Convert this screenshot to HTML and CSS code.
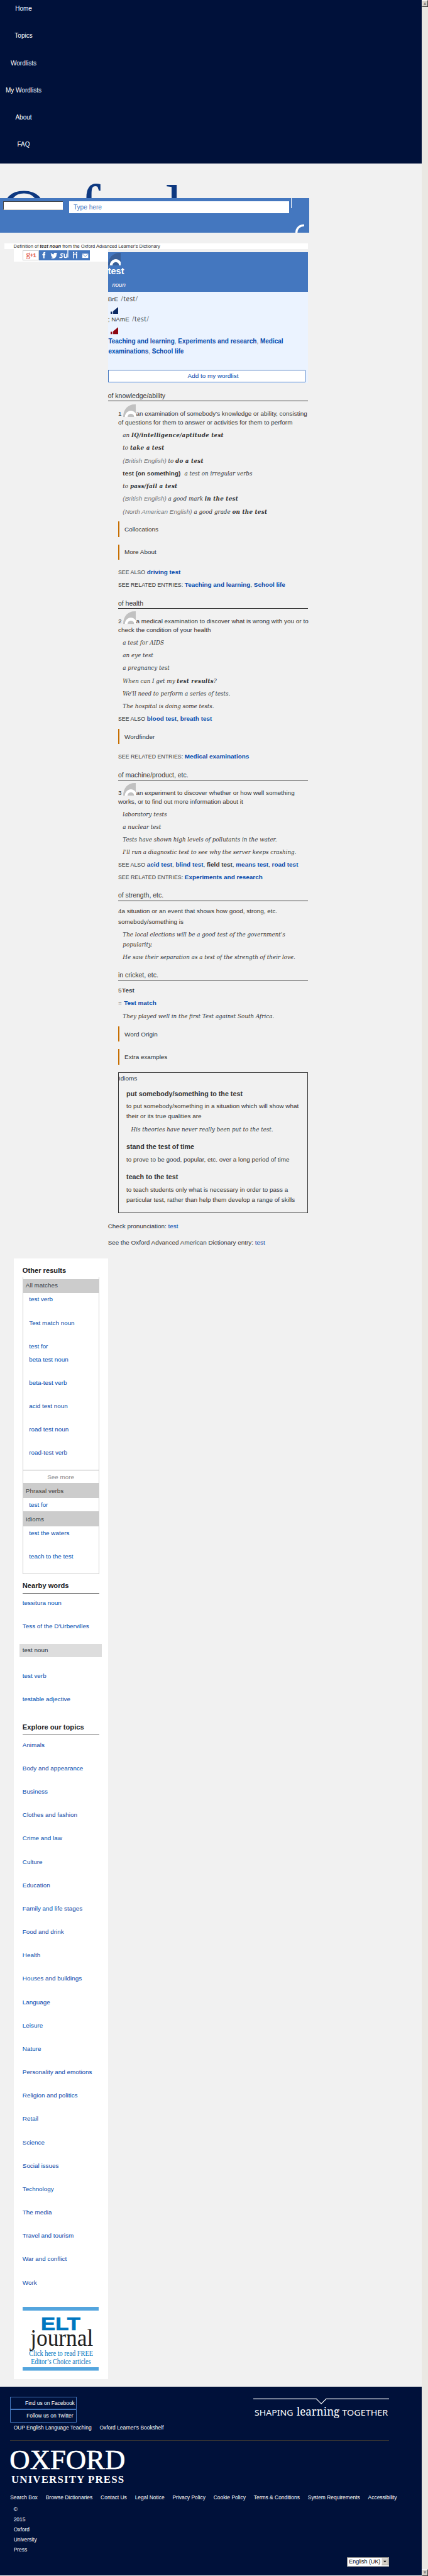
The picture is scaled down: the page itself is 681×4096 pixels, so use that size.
FILE: index.html
```html
<!DOCTYPE html>
<html lang="en">
<head>
<meta charset="utf-8">
<title>test noun - Oxford Advanced Learner's Dictionary</title>
<link rel="stylesheet" href="styles.css">
</head>
<body>
<svg width="0" height="0" class="defs">
  <symbol id="key" viewBox="0 0 30 30">
    <path d="M0 30C0 12 11 0 27 0h3v30z" fill="currentColor"/>
    <path d="M4 30a14 14.5 0 0 1 26-8v8z" fill="#fff"/>
    <path d="M10.3 30a7.8 8.2 0 0 1 15.6 0z" fill="currentColor"/>
  </symbol>
  <symbol id="speaker" viewBox="0 0 18 17">
    <path d="M0 11h4v6H0zM6 17v-7L18 0v17z" fill="currentColor"/>
  </symbol>
</svg>
<div class="page">
  <div class="content">
    <nav class="topnav">
      <a>Home</a><a>Topics</a><a>Wordlists</a><a>My Wordlists</a><a>About</a><a>FAQ</a>
    </nav>
    <svg class="brand" width="728" height="82" viewBox="0 0 728 82">
      <text><tspan x="3" y="161">O</tspan><tspan x="187" y="152">f</tspan><tspan x="352" y="152">d</tspan></text>
    </svg>
    <div class="searchbar">
      <span class="picker"></span>
      <span class="query">Type here</span>
      <span class="divider"></span>
      <svg class="lens" width="20" height="20" viewBox="0 0 20 20"><circle cx="19" cy="20" r="16.5" fill="none" stroke="#fff" stroke-width="5"/></svg>
    </div>
    <div class="crumb">Definition of <b><i>test noun</i></b> from the Oxford Advanced Learner's Dictionary</div>
    <div class="main">
      <div class="sharecol">
        <div class="share">
          <span class="gplus"><b>g</b>+1</span>
          <svg width="120" height="24" viewBox="0 0 120 24">
            <rect width="120" height="24" fill="#4477bf"/>
            <g fill="#fff">
              <path d="M10 19v-7H8V9h2V7.500c0-2.500 1.400-3.500 3.500-3.500H15v3h-1c-.8 0-1 .3-1 1v1h2l-.3 3H13v7z"/>
              <path d="M28 6c2 2.500 4 3.500 6.500 3.500 0-3 2-4 3.500-4 1 0 1.800.4 2.500 1l2.500-.8-1.300 1.800 1.800-.4-2 2c0 6-3.500 10-8.500 10-2 0-3.700-.5-5-1.500 2 0 3.500-.5 4.500-1.300-1.700-.3-2.800-1.200-3.300-2.500h1.500c-1.700-.6-2.600-2-2.600-3.600l1.300.4C28 9.500 27.400 7.500 28 6z"/>
              <path d="M67 0h2v17h-2zM80 4h3v2.500h-3zM87 4h3v2.500h-3zM80 8h10v2H80z"/>
              <path d="M102 8h14v10h-14z"/>
            </g>
            <g fill="none" stroke="#fff" stroke-width="2.300">
              <path d="M57.500 8h-4.500c-2 0-2 3.500 0 4s2.500 5 0 5h-5M59.500 8v6.500c0 3.500 6 3.500 6 0V8M81.500 8v11M88.500 8v11"/>
            </g>
            <path d="M103 9l6 6 6-6" fill="none" stroke="#4477bf" stroke-width="1.200"/>
          </svg>
        </div>
      </div>
      <article class="entry">
        <header class="head">
          <svg class="key" width="30" height="30"><use href="#key"/></svg>
          <h1>test</h1>
          <p>noun</p>
        </header>
        <div class="phon">
          <p>BrE <span class="ipa"><s>/</s>test<s>/</s></span></p>
          <svg class="spk uk" width="18" height="17"><use href="#speaker"/></svg>
          <p>; NAmE <span class="ipa"><s>/</s>test<s>/</s></span></p>
          <svg class="spk us" width="18" height="17"><use href="#speaker"/></svg>
          <p class="topics"><a>Teaching and learning</a>, <a>Experiments and research</a>, <a>Medical examinations</a>, <a>School life</a></p>
          <div class="add">Add to my wordlist</div>
        </div>

        <h2>of knowledge/ability</h2>
        <div class="sense">
          <p class="def">1 <svg class="key" width="30" height="30"><use href="#key"/></svg>an examination of somebody’s knowledge or ability, consisting<br>of questions for them to answer or activities for them to perform</p>
          <p class="ex"><i>an <b>IQ/intelligence/aptitude test</b></i></p>
          <p class="ex"><i>to <b>take a test</b></i></p>
          <p class="ex"><em>(British English)</em> <i>to <b>do a test</b></i></p>
          <p class="ex"><strong>test (on something)</strong> <i class="after">a test on irregular verbs</i></p>
          <p class="ex"><i>to <b>pass/fail a test</b></i></p>
          <p class="ex"><em>(British English)</em> <i>a good mark <b>in the test</b></i></p>
          <p class="ex"><em>(North American English)</em> <i>a good grade <b>on the test</b></i></p>
          <div class="fold">Collocations</div>
          <div class="fold">More About</div>
          <p class="ref r18"><small>SEE ALSO</small> <a>driving test</a></p>
          <p class="ref"><small>SEE RELATED ENTRIES:</small> <a>Teaching and learning</a>, <a>School life</a></p>

          <h2>of health</h2>
          <p class="def">2 <svg class="key" width="30" height="30"><use href="#key"/></svg>a medical examination to discover what is wrong with you or to<br>check the condition of your health</p>
          <p class="ex"><i>a test for AIDS</i></p>
          <p class="ex"><i>an eye test</i></p>
          <p class="ex"><i>a pregnancy test</i></p>
          <p class="ex"><i>When can I get my <b>test results</b>?</i></p>
          <p class="ex"><i>We'll need to perform a series of tests.</i></p>
          <p class="ex"><i>The hospital is doing some tests.</i></p>
          <p class="ref r5"><small>SEE ALSO</small> <a>blood test</a>, <a>breath test</a></p>
          <div class="fold f12">Wordfinder</div>
          <p class="ref r18"><small>SEE RELATED ENTRIES:</small> <a>Medical examinations</a></p>

          <h2>of machine/product, etc.</h2>
          <p class="def">3 <svg class="key" width="30" height="30"><use href="#key"/></svg>an experiment to discover whether or how well something<br>works, or to find out more information about it</p>
          <p class="ex"><i>laboratory tests</i></p>
          <p class="ex"><i>a nuclear test</i></p>
          <p class="ex"><i>Tests have shown high levels of pollutants in the water.</i></p>
          <p class="ex"><i>I'll run a diagnostic test to see why the server keeps crashing.</i></p>
          <p class="ref r5"><small>SEE ALSO</small> <a>acid test</a>, <a>blind test</a>, <strong>field test</strong>, <a>means test</a>, <a>road test</a></p>
          <p class="ref"><small>SEE RELATED ENTRIES:</small> <a>Experiments and research</a></p>

          <h2>of strength, etc.</h2>
          <p class="plain">4a situation or an event that shows how good, strong, etc.<br>somebody/something is</p>
          <p class="ex e6"><i>The local elections will be a good test of the government's<br>popularity.</i></p>
          <p class="ex"><i>He saw their separation as a test of the strength of their love.</i></p>

          <h2 class="h17">in cricket, etc.</h2>
          <p class="plain p12">5<strong class="lemma">Test</strong></p>
          <p class="ref">= <a class="eq">Test match</a></p>
          <p class="ex e7"><i>They played well in the first Test against South Africa.</i></p>
          <div class="fold">Word Origin</div>
          <div class="fold">Extra examples</div>
          <section class="idioms">
            <p>Idioms</p>
            <div class="idm">
              <h3>put somebody/something to the test</h3>
              <p>to put somebody/something in a situation which will show what<br>their or its true qualities are</p>
              <p class="ex e6"><i>His theories have never really been put to the test.</i></p>
              <h3>stand the test of time</h3>
              <p>to prove to be good, popular, etc. over a long period of time</p>
              <h3>teach to the test</h3>
              <p>to teach students only what is necessary in order to pass a<br>particular test, rather than help them develop a range of skills</p>
            </div>
          </section>
        </div>
        <p class="note n1">Check pronunciation: <a>test</a></p>
        <p class="note n2">See the Oxford Advanced American Dictionary entry: <a>test</a></p>
      </article>
    </div>

    <aside class="side">
      <h4>Other results</h4>
      <div class="results">
        <h5 class="first">All matches</h5>
        <ul>
          <li>test verb</li><li>Test match noun</li><li class="short">test for</li><li>beta test noun</li>
          <li>beta-test verb</li><li>acid test noun</li><li>road test noun</li><li>road-test verb</li>
        </ul>
        <div class="more">See more</div>
        <h5>Phrasal verbs</h5>
        <ul><li class="short">test for</li></ul>
        <h5>Idioms</h5>
        <ul><li>test the waters</li><li>teach to the test</li></ul>
      </div>
      <h4 class="ruled nearby">Nearby words</h4>
      <ul class="links">
        <li>tessitura noun</li><li class="tight">Tess of the D'Urbervilles</li><li class="current">test noun</li><li>test verb</li><li>testable adjective</li>
      </ul>
      <h4 class="ruled explore">Explore our topics</h4>
      <ul class="links">
        <li>Animals</li><li>Body and appearance</li><li>Business</li><li>Clothes and fashion</li><li>Crime and law</li><li>Culture</li><li>Education</li><li>Family and life stages</li><li>Food and drink</li><li>Health</li><li>Houses and buildings</li><li>Language</li><li>Leisure</li><li>Nature</li><li>Personality and emotions</li><li>Religion and politics</li><li>Retail</li><li>Science</li><li>Social issues</li><li>Technology</li><li>The media</li><li>Travel and tourism</li><li>War and conflict</li><li>Work</li>
      </ul>
      <svg class="elt" width="180" height="150" viewBox="0 0 180 150">
        <path d="M0 0h180v9H0zM0 142h180v8H0z" fill="#54a5de"/>
        <text class="elt-a" x="43" y="55" textLength="93" lengthAdjust="spacingAndGlyphs">ELT</text>
        <text class="elt-b" x="18" y="92" textLength="148" lengthAdjust="spacingAndGlyphs">journal</text>
        <text class="elt-c" x="15" y="116" textLength="151" lengthAdjust="spacingAndGlyphs">Click here to read FREE</text>
        <text class="elt-c" x="19.500" y="135" textLength="141" lengthAdjust="spacingAndGlyphs">Editor’s Choice articles</text>
      </svg>
    </aside>

    <footer class="foot">
      <div class="foot-top">
        <div class="social"><a>Find us on Facebook</a><a>Follow us on Twitter</a></div>
        <svg width="320" height="56" viewBox="0 0 320 56">
          <path d="M0 5h148.500l11.500 11.500L171.500 5H320" fill="none" stroke="#fff" stroke-width="1.800"/>
          <g fill="#fff">
            <text class="sans" x="3" y="45" textLength="91" lengthAdjust="spacingAndGlyphs">SHAPING</text>
            <text class="serif" x="102" y="45" textLength="101" lengthAdjust="spacingAndGlyphs">learning</text>
            <text class="sans" x="209" y="45" textLength="108" lengthAdjust="spacingAndGlyphs">TOGETHER</text>
          </g>
        </svg>
      </div>
      <div class="row partners"><a>OUP English Language Teaching</a><a>Oxford Learner's Bookshelf</a></div>
      <svg class="oup" width="275" height="86" viewBox="0 0 275 86" fill="#fff">
        <text class="oup-a" x="-1" y="47" textLength="272" lengthAdjust="spacingAndGlyphs">OXFORD</text>
        <text class="oup-b" x="3" y="80" textLength="265" lengthAdjust="spacing">UNIVERSITY PRESS</text>
      </svg>
      <div class="row legal"><a>Search Box</a><a>Browse Dictionaries</a><a>Contact Us</a><a>Legal Notice</a><a>Privacy Policy</a><a>Cookie Policy</a><a>Terms &amp; Conditions</a><a>System Requirements</a><a>Accessibility</a></div>
      <p class="copy">©<br>2015<br>Oxford<br>University<br>Press</p>
      <div class="lang"><span>English (UK)</span><svg width="16" height="18" viewBox="0 0 16 18"><path d="M0 0h16v18H0z" fill="#d4d0c8"/><path d="M.5 17V.5H15" fill="none" stroke="#fff"/><path d="M0 17.500h15.500V0" fill="none" stroke="#404040"/><path d="M4.500 7h7L8 11z"/></svg></div>
    </footer>
  </div>
  <div class="scroll"><span>▲</span><span>▼</span></div>
</div>
</body>
</html>
```
FILE: styles.css
```css
* { box-sizing: border-box; }
html, body { margin: 0; overflow: hidden; background: #f1f1f1; }
h1, h2, h3, h4, h5, p, ul { margin: 0; padding: 0; font-size: inherit; font-weight: normal; }
ul { list-style: none; }
svg { display: block; }
.defs { position: absolute; }

.page {
  zoom: 0.676;
  display: flex;
  width: 1008px;
  height: 6059px;
  font: 14.67px/24px "Liberation Sans", Arial, sans-serif;
  color: #333;
  white-space: nowrap;
}
.content { width: 992px; flex: none; }
a { color: #0449ab; }

.scroll {
  width: 16px; flex: none;
  display: flex; flex-direction: column; justify-content: space-between;
  background: #eae8e3;
}
.scroll span {
  height: 16px;
  font: 8px/14px "DejaVu Sans", sans-serif;
  text-align: center;
  color: #808080;
  background: #d4d0c8;
  border: 1px solid #fff;
  border-right-color: #404040;
  border-bottom-color: #404040;
}

.topnav { height: 384px; background: #00113a; }
.topnav a { display: block; width: 111px; height: 64px; line-height: 42px; font-size: 14.8px; text-align: center; color: #fff; }

.brand { overflow: hidden; }
.brand text { font: 148px "Liberation Serif", serif; fill: #0d3880; }

.searchbar { display: flex; align-items: flex-start; width: 728px; height: 81px; padding-left: 8px; background: #4477bf; }
.picker { width: 140px; height: 21px; margin-top: 7px; background: #fff; border: 2px solid #404040; border-right: 0; border-bottom-color: #d4d0c8; }
.query { width: 518px; height: 28px; margin: 8px 0 0 15px; padding-left: 10px; line-height: 29px; font-size: 15px; color: #4477bf; background: #fff; }
.divider { width: 2px; height: 24px; margin-left: 4px; background: #fff; }
.lens { margin: 61px 0 0 9px; }

.crumb { width: 714px; height: 14px; margin: 25px 0 0 11px; padding-left: 21px; font-size: 11.1px; line-height: 14px; background: #fff; }

.main { display: flex; }
.sharecol { width: 254px; padding-left: 32px; }
.share { display: flex; height: 29px; padding: 3px 0 0 22px; background: #fff; }
.gplus { width: 38px; height: 24px; line-height: 21px; text-align: center; font-size: 14px; font-weight: bold; letter-spacing: -1px; color: #dd4b39; border: 1px solid #ccc; }
.gplus b { font: 20px/16px "Liberation Serif", serif; }

.entry { width: 471px; padding-top: 7px; }
.head { height: 94px; padding-top: 2px; background: #4477bf; color: #fff; }
.head .key { color: #395f98; }
.head h1 { font-size: 21.5px; font-weight: bold; line-height: 28px; }
.head p { margin: 5px 0 0 10px; font-size: 14.2px; font-style: italic; }
.phon { height: 214px; padding-top: 5px; background: #ebf3ff; }
.ipa { margin-left: 2px; font-family: "Noto Sans", sans-serif; line-height: 1; letter-spacing: .6px; }
.ipa s { text-decoration: none; color: #777; }
.spk { margin: 6px 0 1px 6px; }
.uk { color: #0b2862; }
.us { color: #8f0610; }
.phon .topics { width: 471px; margin-top: 5px; padding-left: 1px; font-size: 14.8px; white-space: normal; color: #777; }
.topics a, .ref a { font-weight: bold; }
.add { width: 465px; height: 30px; margin-top: 30px; padding-left: 30px; line-height: 27px; text-align: center; color: #0449ab; background: #fff; border: 2px solid #4477bf; }

h2 { height: 25px; margin-top: 18px; padding-top: 1px; font-size: 15.5px; line-height: 23px; border-bottom: 1px solid #333; }
h2.h17 { margin-top: 17px; }
.sense { padding-left: 24px; }
.def { padding-top: 19px; line-height: 21px; margin-bottom: 7px; }
.def .key { display: inline-block; margin-top: -20px; vertical-align: -3px; color: #c1c1c1; }
.ex { padding-left: 11px; }
.ex + .ex { margin-top: 6px; }
.ex i { font: italic 14.4px/1 "DejaVu Serif Condensed", "DejaVu Serif", serif; font-stretch: condensed; }
.ex i b { letter-spacing: .4px; }
.ex em { color: #777; }
.ex i.after { margin-left: 5px; }
.ex.e6 { margin-top: 6px; }
.ex.e7 { margin-top: 7px; }
.ex.e6 i { line-height: 24px; }
.fold { height: 36px; margin-top: 18px; padding: 1px 0 0 12px; line-height: 36px; border-left: 3px solid #c76e00; }
.ex + .fold { margin-top: 11px; }
.fold.f12 { margin-top: 12px; }
.ref { margin-top: 6px; }
.ref.r5 { margin-top: 5px; }
.ref.r18 { margin-top: 18px; }
.ref small { font-size: 13.05px; line-height: 1; }
.ref .eq { margin-left: 1px; }
.plain { margin-top: 13px; }
.plain.p12 { margin-top: 12px; }
.lemma { margin-left: 1px; }

.idioms { height: 332px; margin-top: 18px; padding-top: 1px; border: 1px solid #333; }
.idm { padding-left: 18px; }
.idm h3 { margin-top: 17px; font-size: 15.9px; font-weight: bold; }
.idm h3:first-child { margin-top: 12px; }
.idm h3 + p { margin-top: 6px; }
.note.n1 { margin-top: 19px; }
.note.n2 { margin-top: 15px; }

.side { width: 222px; height: 2636px; margin: 24px 0 0 32px; padding: 16px 21px 0; background: #fff; font-size: 14.6px; }
.side h4 { font-size: 16.5px; font-weight: bold; color: #222; }
.side h4.ruled { height: 31px; border-bottom: 1px solid #666; margin-bottom: 11px; }
.side h4.nearby { margin-top: 15px; }
.side h4.explore { margin-top: 11px; }
.results { height: 697px; margin-top: 5px; padding-top: 4px; border: 1px solid #ccc; border-top: 0; }
.results h5 { height: 36px; padding-left: 6px; line-height: 38px; color: #444; background: #ccc; }
.results h5.first { height: 32px; line-height: 31px; }
.results li { height: 55px; padding: 4px 0 0 14px; color: #0449ab; }
.results li.short { height: 31px; }
.more { height: 31px; line-height: 32px; text-align: center; color: #888; border-top: 1px solid #aaa; }
.links li { height: 55px; color: #0449ab; }
.links li.tight { height: 53px; }
.links li.current { height: 31px; margin: 0 -7px 32px; padding-left: 7px; line-height: 31px; color: #333; background: #ddd; }
.elt { margin-top: 14px; }
.elt-a { font: bold 43px "Liberation Sans", sans-serif; fill: #0077c0; stroke: #0077c0; stroke-width: 1; }
.elt-b { font: 55px "Liberation Serif", serif; fill: #222; }
.elt-c { font: 17.5px "Liberation Serif", serif; fill: #0077c0; }

.foot { height: 444px; margin-top: 18px; padding: 24px 0 0 24px; background: #00113a; font-size: 12.5px; color: #fff; }
.foot a { color: #fff; }
.foot-top { display: flex; justify-content: space-between; width: 892px; height: 60px; }
.foot-top .sans { font: 19.6px "Noto Sans", sans-serif; }
.foot-top .serif { font: 27px "Noto Serif", "Liberation Serif", serif; }
.social a { display: block; width: 157px; height: 30px; padding-left: 30px; line-height: 28px; text-align: center; border: 2px solid #4477bf; }
.row { display: flex; gap: 19px; }
.partners { width: 892px; height: 43px; padding: 1px 0 0 8px; border-bottom: 1px solid #333; }
.oup { margin-top: 20px; }
.oup-a { font: 64px "Liberation Serif", serif; stroke: #fff; stroke-width: 1; }
.oup-b { font: bold 25px "Liberation Serif", serif; }
.legal { margin-top: 15px; }
.copy { margin: 4px 0 0 8px; }
.lang { display: flex; width: 99px; height: 22px; margin: 5px 0 0 793px; padding-left: 3px; background: #fff; border: 2px solid #808080; border-right-color: #d4d0c8; border-bottom-color: #d4d0c8; color: #000; line-height: 18px; font-size: 13.2px; }
.lang span { flex: 1; }
```
